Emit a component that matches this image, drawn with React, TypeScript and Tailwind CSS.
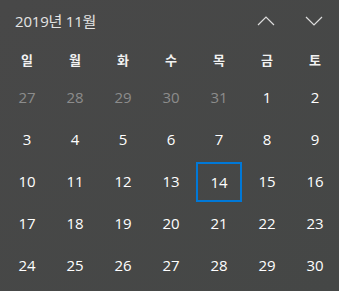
const weekdays = ['일', '월', '화', '수', '목', '금', '토']

type Day = { n: number; other?: boolean; today?: boolean }

const days: Day[] = [
  ...[27, 28, 29, 30, 31].map((n) => ({ n, other: true })),
  ...Array.from({ length: 30 }, (_, i) => ({ n: i + 1, today: i + 1 === 14 })),
]

const Chevron = ({ up }: { up?: boolean }) => (
  <svg width="18" height="10" viewBox="0 0 18 10" fill="none">
    <path
      d={up ? 'M1 9 L9 1 L17 9' : 'M1 1 L9 9 L17 1'}
      stroke="#dcdcdc"
      strokeWidth="1.2"
    />
  </svg>
)

export default function App() {
  return (
    <div
      className="w-[339px] h-[291px] overflow-hidden bg-gradient-to-br from-[#484848] to-[#454746] text-white"
      style={{ fontFamily: '"Open Sans", "Noto Sans CJK KR", sans-serif' }}
    >
      <div className="flex items-center h-[42px] pl-[15px]">
        <span className="text-[15px] text-[#e4e4e4] tracking-[-0.2px]">2019년 11월</span>
        <div className="ml-auto flex">
          <button className="w-[48px] h-[42px] flex items-center justify-center">
            <Chevron up />
          </button>
          <button className="w-[48px] h-[42px] flex items-center justify-center mr-[1px]">
            <Chevron />
          </button>
        </div>
      </div>
      <div className="grid grid-cols-7 w-[336px] ml-[3px] h-[34px] items-center pt-[1px]">
        {weekdays.map((d) => (
          <div
            key={d}
            className="text-center text-[13px] font-bold text-[#f2f2f2]"
            style={{ fontFamily: '"Noto Sans CJK KR", sans-serif' }}
          >
            {d}
          </div>
        ))}
      </div>
      <div className="grid grid-cols-7 w-[336px] ml-[3px]">
        {days.map((d, i) => (
          <div key={i} className="h-[42px] flex items-center justify-center">
            <div
              className={
                'w-[46px] h-[40px] flex items-center justify-center text-[15px] ' +
                (d.today ? 'border-2 border-[#0078d7] mt-[2px] ' : '') +
                (d.other ? 'text-[#8c8c8c]' : 'text-white')
              }
            >
              {d.n}
            </div>
          </div>
        ))}
      </div>
    </div>
  )
}
